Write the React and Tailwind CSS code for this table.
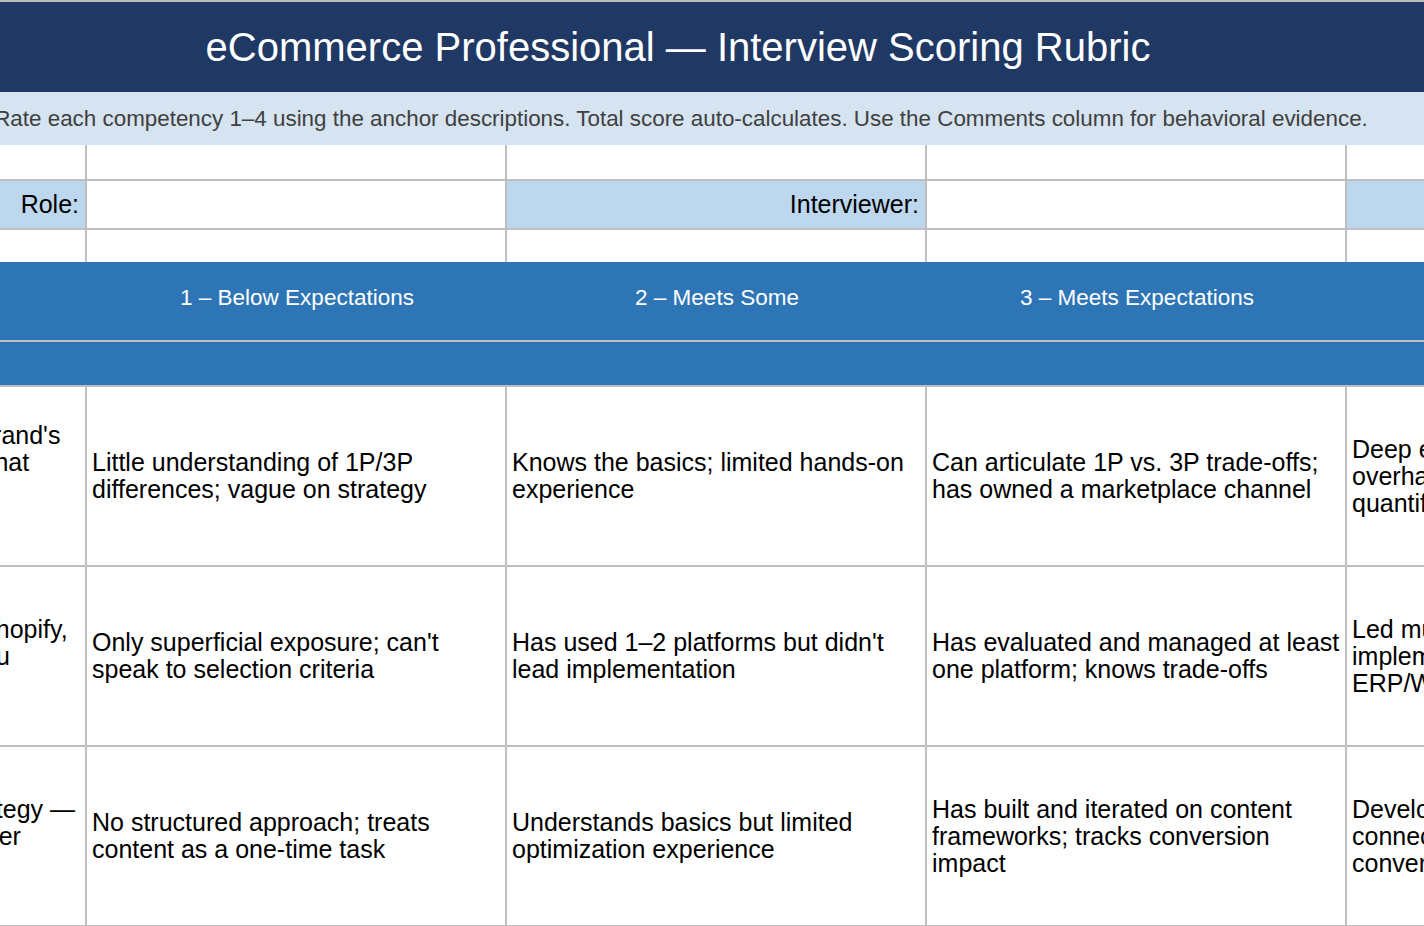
const LINE = "border-[#bfbfbf]";

const ROWS = [
  [
    ["Tell me how you grew a brand's", "marketplace presence. What", "results did you drive", "across 1P and 3P?"],
    ["Little understanding of 1P/3P", "differences; vague on strategy"],
    ["Knows the basics; limited hands-on", "experience"],
    ["Can articulate 1P vs. 3P trade-offs;", "has owned a marketplace channel"],
    ["Deep expertise across 1P/3P; has led an", "overhaul of marketplace strategy with", "quantified revenue growth"],
  ],
  [
    ["Which eCom platforms (Shopify,", "Magento, Adobe) have you", "worked with?"],
    ["Only superficial exposure; can't", "speak to selection criteria"],
    ["Has used 1–2 platforms but didn't", "lead implementation"],
    ["Has evaluated and managed at least", "one platform; knows trade-offs"],
    ["Led multiple platform migrations or", "implementations; integrated with", "ERP/WMS and 3PL systems"],
  ],
  [
    ["Product detail & SEO strategy —", "how do PDPs convert faster", "and rank in search?"],
    ["No structured approach; treats", "content as a one-time task"],
    ["Understands basics but limited", "optimization experience"],
    ["Has built and iterated on content", "frameworks; tracks conversion", "impact"],
    ["Developed content strategy frameworks", "connecting SEO, A+ content and", "conversion rate improvements"],
  ],
];

const LEVELS = [
  "Competency",
  "1 – Below Expectations",
  "2 – Meets Some",
  "3 – Meets Expectations",
  "4 – Exceeds Expectations",
];

function Lines({ lines }) {
  return lines.map((l, i) => (
    <span key={i}>
      {l}
      {i < lines.length - 1 && <br />}
    </span>
  ));
}

export default function App() {
  return (
    <div className="w-[1424px] h-[926px] overflow-hidden bg-white text-black border-t-2 border-[#bdbdbd] font-['Liberation_Sans',Arial,sans-serif]">

      {/* Title */}
      <div className="h-[90px] bg-[#1f3864] flex items-center justify-center pr-[68px]">
        <h1 className="text-[40px] text-white whitespace-nowrap">
          eCommerce Professional — Interview Scoring Rubric
        </h1>
      </div>
      <div className="h-[53px] bg-[#d6e3f0] flex items-center justify-center pr-[62px]">
        <p className="text-[22.4px] text-[#404040] whitespace-nowrap">
          Rate each competency 1–4 using the anchor descriptions. Total score auto-calculates. Use the Comments column for behavioral evidence.
        </p>
      </div>

      {/* Sheet grid (scrolled, column A partly hidden) */}
      <div className="ml-[-294px] grid grid-cols-[381px_420px_420px_420px_420px] text-[25px] leading-[27px]">

        {[0, 1, 2, 3, 4].map(i => (
          <div key={"a" + i} className={`h-[36px] border-r-2 border-b-2 ${LINE}`} />
        ))}

        {["Role:", "", "Interviewer:", "", "Date:"].map((t, i) => (
          <div key={"r" + i}
            className={`h-[49px] border-r-2 border-b-2 ${LINE} flex items-center justify-end px-[6px] ${
              i % 2 === 0 ? "bg-[#bdd7ee]" : "bg-white"}`}>
            {t}
          </div>
        ))}

        {[0, 1, 2, 3, 4].map(i => (
          <div key={"b" + i} className={`h-[32px] border-r-2 ${LINE}`} />
        ))}

        {LEVELS.map(t => (
          <div key={t}
            className={`h-[80px] bg-[#2e75b6] border-b-2 ${LINE} flex items-center justify-center pb-[8px] text-[22.5px] text-white whitespace-nowrap`}>
            {t}
          </div>
        ))}

        <div className={`col-span-5 h-[45px] bg-[#2e75b6] border-b-2 ${LINE}`} />

        {ROWS.map((row, r) =>
          row.map((lines, c) => (
            <div key={r + "-" + c}
              className={`h-[180px] border-r-2 border-b-2 ${LINE} flex items-center px-[5px] whitespace-nowrap overflow-hidden`}>
              <div><Lines lines={lines} /></div>
            </div>
          ))
        )}
      </div>
    </div>
  );
}
